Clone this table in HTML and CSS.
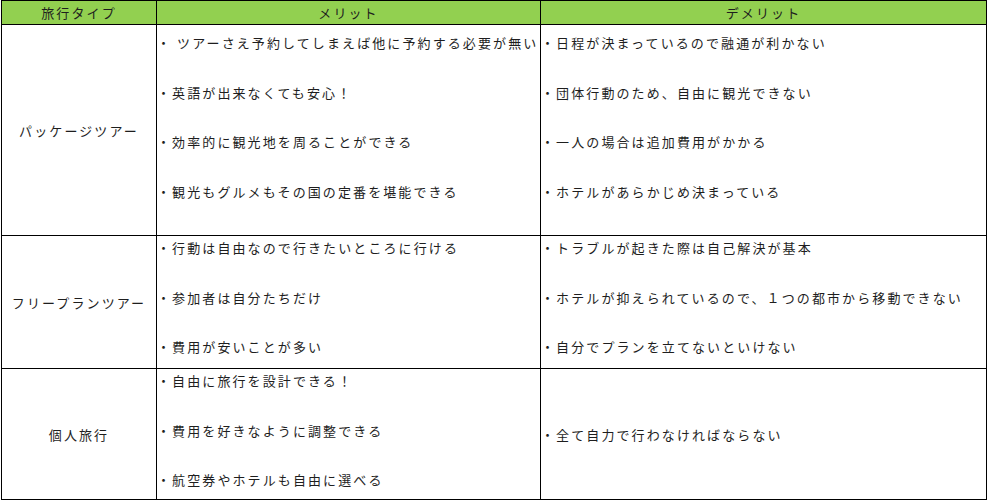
FILE: index.html
```html
<!DOCTYPE html>
<html lang="ja">
<head>
<meta charset="utf-8">
<title>旅行タイプ比較</title>
<link rel="stylesheet" href="styles.css">
</head>
<body>
<table class="cmp">
  <colgroup>
    <col class="c-type">
    <col class="c-merit">
    <col class="c-demerit">
  </colgroup>
  <thead>
    <tr class="head">
      <th>旅行タイプ</th>
      <th>メリット</th>
      <th>デメリット</th>
    </tr>
  </thead>
  <tbody>
    <tr class="r1">
      <td class="type">パッケージツアー</td>
      <td class="list">
        <div class="item">・ ツアーさえ予約してしまえば他に予約する必要が無い</div>
        <div class="item">・英語が出来なくても安心！</div>
        <div class="item">・効率的に観光地を周ることができる</div>
        <div class="item">・観光もグルメもその国の定番を堪能できる</div>
      </td>
      <td class="list">
        <div class="item">・日程が決まっているので融通が利かない</div>
        <div class="item">・団体行動のため、自由に観光できない</div>
        <div class="item">・一人の場合は追加費用がかかる</div>
        <div class="item">・ホテルがあらかじめ決まっている</div>
      </td>
    </tr>
    <tr class="r2">
      <td class="type">フリープランツアー</td>
      <td class="list">
        <div class="item">・行動は自由なので行きたいところに行ける</div>
        <div class="item">・参加者は自分たちだけ</div>
        <div class="item">・費用が安いことが多い</div>
      </td>
      <td class="list">
        <div class="item">・トラブルが起きた際は自己解決が基本</div>
        <div class="item">・ホテルが抑えられているので、１つの都市から移動できない</div>
        <div class="item">・自分でプランを立てないといけない</div>
      </td>
    </tr>
    <tr class="r3">
      <td class="type">個人旅行</td>
      <td class="list">
        <div class="item">・自由に旅行を設計できる！</div>
        <div class="item">・費用を好きなように調整できる</div>
        <div class="item">・航空券やホテルも自由に選べる</div>
      </td>
      <td class="single">・全て自力で行わなければならない</td>
    </tr>
  </tbody>
</table>
</body>
</html>
```

FILE: styles.css
```css
html, body {
  margin: 0;
  padding: 0;
  background: #ffffff;
}

body {
  font-family: "Noto Sans CJK JP", "Noto Sans", sans-serif;
  font-size: 13px;
  color: #1e1e1e;
  letter-spacing: 2.1px;
}

.cmp {
  border-collapse: collapse;
  table-layout: fixed;
  width: 985px;
  margin: 0 0 0 1px;
}

.c-type { width: 155px; }
.c-merit { width: 384px; }
.c-demerit { width: 446px; }

.cmp th,
.cmp td {
  border: 1px solid #000000;
  padding: 0;
}

.head th {
  background: #92d050;
  font-weight: normal;
  text-align: center;
  height: 23px;
  line-height: 23px;
}

.type {
  text-align: center;
  vertical-align: middle;
  padding-bottom: 6px;
}

.list {
  vertical-align: top;
  padding-left: 5px;
}

.list .item {
  line-height: 24.8px;
  height: 24.8px;
  margin-bottom: 24.8px;
  white-space: nowrap;
}

.list .item:last-child {
  margin-bottom: 0;
}

.r1 td { height: 204px; }
.r1 .list { padding-top: 6px; }
.r1 .type { padding-top: 0; }
.r2 td { height: 132px; }
.r3 td { height: 130px; }
.r3 .type { padding-bottom: 0; }

.single {
  vertical-align: middle;
  padding-left: 5px;
}
```
